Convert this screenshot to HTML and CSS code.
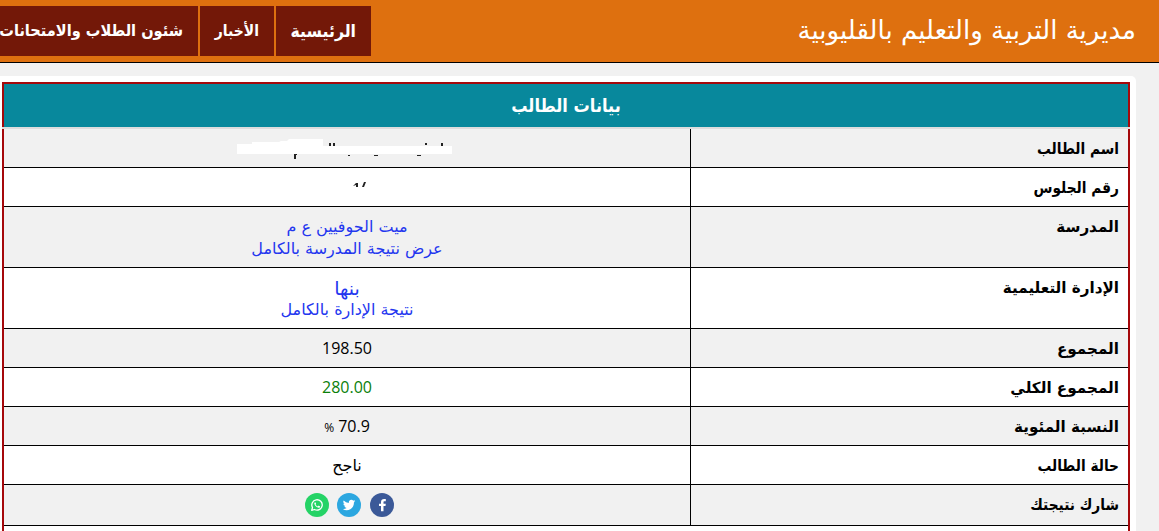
FILE: index.html
```html
<!DOCTYPE html>
<html lang="ar" dir="rtl">

<head>
    <meta charset="UTF-8">
    <meta name="viewport" content="width=device-width, initial-scale=1.0">
    <title>بيانات الطالب</title>
    <link rel="stylesheet" href="styles.css">
</head>

<body>
    <header class="header">
        <h1 class="site-title">مديرية التربية والتعليم بالقليوبية</h1>
        <nav class="menu">
            <a class="menu-item home">الرئيسية</a>
            <a class="menu-item news">الأخبار</a>
            <a class="menu-item students">شئون الطلاب والامتحانات</a>
        </nav>
    </header>

    <main class="card">
        <div class="result-head">
            <h2 class="result-title">بيانات الطالب</h2>
        </div>
        <div class="result">
            <div class="row">
                <div class="label">اسم الطالب</div>
                <div class="value hidden-name">
                    <!-- hidden name -->
                    <svg width="216" height="22" viewBox="237 137 216 22">
                        <path fill="#fff" d="M237 144h15v-2h27l2-1h6l2-2h34v7h129v8H237z"/>
                        <path fill="#222" d="M329 143h2v3h-2zM333 143h2v3h-2zM425 143h2v2h-2zM441 143h2v3h-2zM294 154h3v1h-1v4h-2zM348 155h2v1h-2zM374 155h4v1h-4zM417 155h4v1h-4z"/>
                    </svg>
                </div>
            </div>
            <div class="row">
                <div class="label">رقم الجلوس</div>
                <div class="value hidden-seat">
                    <svg width="16" height="8" viewBox="352 181 16 8">
                        <path fill="#222" d="M353 186l3-3h2v4h-2v-2zM362 187l2-5h2l-2 5z"/>
                    </svg>
                </div>
            </div>
            <div class="row tall">
                <div class="label wide">المدرسة</div>
                <div class="value">
                    <a class="link">ميت الحوفيين ع م</a>
                    <a class="link">عرض نتيجة المدرسة بالكامل</a>
                </div>
            </div>
            <div class="row tall">
                <div class="label wide">الإدارة التعليمية</div>
                <div class="value">
                    <a class="link town">بنها</a>
                    <a class="link">نتيجة الإدارة بالكامل</a>
                </div>
            </div>
            <div class="row">
                <div class="label wide">المجموع</div>
                <div class="value number">198.50</div>
            </div>
            <div class="row">
                <div class="label wide">المجموع الكلي</div>
                <div class="value number green">280.00</div>
            </div>
            <div class="row">
                <div class="label wide">النسبة المئوية</div>
                <div class="value number"><span dir="ltr"><span class="sign">%</span> 70.9</span></div>
            </div>
            <div class="row">
                <div class="label">حالة الطالب</div>
                <div class="value">ناجح</div>
            </div>
            <div class="row share-row">
                <div class="label">شارك نتيجتك</div>
                <div class="value share">
                    <svg class="icon facebook" viewBox="0 0 24 24">
                        <circle cx="12" cy="12" r="12" fill="#3b5998"/>
                        <path fill="#fff" d="M13.5 18.300v-5.300h2l.3-2.300h-2.300V9.200c0-.6.2-.9 1.100-.9h1.200V6c-.2 0-.9-.1-1.700-.1-1.900 0-3.100 1-3.100 3v1.800H9v2.300h2v5.300z"/>
                    </svg>
                    <svg class="icon" viewBox="0 0 24 24">
                        <circle cx="12" cy="12" r="12" fill="#2ca7e0"/>
                        <path fill="#fff" d="M18.2 8.1a5 5 0 0 1-1.4.4 2.500 2.500 0 0 0 1.100-1.400 5 5 0 0 1-1.600.6 2.550 2.550 0 0 0-4.400 2.300 7.200 7.200 0 0 1-5.200-2.600 2.550 2.550 0 0 0 .8 3.400 2.500 2.500 0 0 1-1.200-.3 2.550 2.550 0 0 0 2.100 2.500 2.500 2.500 0 0 1-1.200.1 2.550 2.550 0 0 0 2.400 1.800A5.100 5.100 0 0 1 5.800 16a7.200 7.200 0 0 0 11.100-6.500 5 5 0 0 0 1.300-1.400z"/>
                    </svg>
                    <svg class="icon" viewBox="0 0 24 24">
                        <circle cx="12" cy="12" r="12" fill="#25d366"/>
                        <path fill="none" stroke="#fff" stroke-width="1.300" stroke-linejoin="round" d="M6.700 17.300l.8-2.800a5.200 5.200 0 1 1 2 2z"/>
                        <path fill="#fff" d="M10.300 9.200c-.3-.1-1 .5-1 1.300 0 1.500 2.500 4.200 4.400 4.200.8 0 1.500-.7 1.400-1.300l-1.500-.8-.8.8c-1-.4-1.700-1.100-2.200-2l.5-.8z"/>
                    </svg>
                </div>
            </div>
            <div class="row last"></div>
        </div>
    </main>
</body>

</html>
```

FILE: styles.css
```css
* {
    box-sizing: border-box;
}

body {
    margin: 0;
    height: 531px;
    overflow: hidden;
    background-color: #f1f1f1;
    font-family: "DejaVu Sans", sans-serif;
    color: #000;
}

.header {
    display: flex;
    justify-content: space-between;
    height: 63px;
    padding: 6px 23px 6px 0;
    background-color: #de700f;
    border-bottom: 1px solid #000;
}

.site-title {
    margin: 0;
    font-size: 26px;
    font-weight: normal;
    line-height: 48px;
    color: #fff;
    white-space: nowrap;
}

.menu {
    display: flex;
    gap: 2px;
    width: 371px;
}

.menu-item {
    flex: none;
    height: 50px;
    padding: 0 15px;
    background-color: #731808;
    color: #fff;
    font-family: "DejaVu Sans Condensed", "DejaVu Sans", sans-serif;
    font-weight: bold;
    line-height: 50px;
    white-space: nowrap;
}

.home {
    width: 95px;
    font-size: 17.5px;
}

.news {
    width: 74px;
    font-size: 15.5px;
}

.students {
    width: 198px;
    font-size: 16.2px;
}

.card {
    width: 1144px;
    height: 455px;
    margin: 13px 23px 0 0;
    padding: 6px 6px 0 10px;
    background-color: #fff;
    border-radius: 5px 5px 0 0;
}

.result-head {
    border-bottom: 2px solid #ddd;
}

.result-title {
    height: 45px;
    margin: 0;
    border: 2px solid #a5080b;
    border-bottom: 0;
    background-color: #08889c;
    color: #fff;
    font-family: "DejaVu Sans Condensed", "DejaVu Sans", sans-serif;
    font-size: 18px;
    line-height: 43px;
    text-align: center;
}

.result {
    border: solid #a5080b;
    border-width: 0 2px;
}

.row {
    display: flex;
    height: 39px;
    border-bottom: 1px solid #000;
    font-size: 16px;
    line-height: 22px;
}

.row:nth-child(odd) {
    background-color: #f1f1f1;
}

.tall {
    height: 61px;
}

.share-row {
    height: 41px;
}

.last {
    height: 5px;
    border-bottom: 0;
}

.label {
    width: 438px;
    padding: 9px 9px 7px;
    border-left: 1px solid #000;
    font-family: "DejaVu Sans Condensed", "DejaVu Sans", sans-serif;
    font-size: 15.3px;
    font-weight: bold;
}

.wide {
    font-family: "DejaVu Sans", sans-serif;
    font-size: 15.2px;
}

.value {
    flex: 1;
    padding: 9px 8px 7px;
    text-align: center;
}

.hidden-name,
.hidden-seat {
    display: flex;
    justify-content: center;
    align-items: flex-start;
}

.hidden-name {
    padding: 8px 12px 0 8px;
}

.hidden-seat {
    padding: 13px 8px 0 34px;
}

.link {
    display: block;
    color: #2336ef;
}

.town {
    font-size: 19px;
}

.number {
    padding-top: 8px;
    font-family: "Open Sans", sans-serif;
}

.green {
    color: #0a800a;
}

.sign {
    font-size: 12px;
}

.share {
    display: flex;
    justify-content: center;
    gap: 8px;
    padding: 8px 8px 8px 13px;
}

.icon {
    width: 24px;
    height: 24px;
}

.facebook {
    margin-left: 1px;
}
```
